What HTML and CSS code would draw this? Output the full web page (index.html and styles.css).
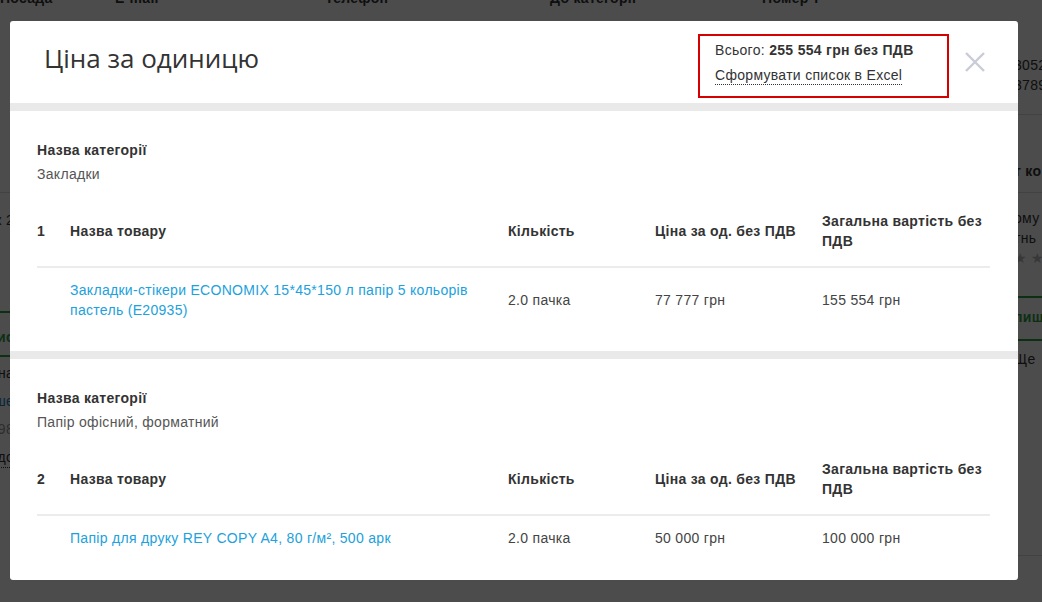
FILE: index.html
```html
<!DOCTYPE html>
<html lang="uk">
<head>
  <meta charset="UTF-8" />
  <meta name="viewport" content="width=device-width, initial-scale=1.0"/>
  <title>Ціна за одиницю</title>
  <link rel="stylesheet" href="styles.css">
</head>
<body>
  <!-- сторінка під модальним вікном -->
  <div class="page">
    <div class="page-head">
      <span>Посада</span>
      <span>E-mail</span>
      <span>Телефон</span>
      <span>До категорії</span>
      <span>Номер т</span>
    </div>
    <div class="page-body">
      <div class="side side-left">
        <div class="bg-row bg-r1"></div>
        <div class="bg-row bg-r2"><span>Блок 2</span></div>
        <div class="bg-row bg-green bg-r3"><b>Опис</b></div>
        <div class="bg-list">
          <p><span>Ціна</span></p>
          <p class="bg-link"><span>Детальніше</span></p>
          <p class="bg-muted"><span>098</span></p>
          <p><span class="bg-dotted">до</span></p>
        </div>
      </div>
      <div class="side side-right">
        <div class="bg-row bg-q1">30522<br>3789</div>
        <div class="bg-row bg-q2"><b>т ко</b></div>
        <div class="bg-row bg-green bg-q3">ому<br>тнь<br><span class="bg-stars">★ ★</span></div>
        <div class="bg-row bg-green bg-q4"><b class="bg-g">пиш</b></div>
        <div class="bg-row bg-q5">Ще</div>
      </div>
    </div>
  </div>

  <div class="overlay">
    <div class="modal">
      <div class="modal-head">
        <h1 class="modal-title">Ціна за одиницю</h1>
        <div class="total-box">
          <div>Всього: <b>255 554 грн без ПДВ</b></div>
          <a class="excel-link" href="#">Сформувати список в Excel</a>
        </div>
        <button class="close-btn" aria-label="Закрити">
          <svg width="20" height="20" viewBox="0 0 20 20">
            <path d="M1 1 L19 19 M19 1 L1 19" stroke="#c9ccd7" stroke-width="2.4" fill="none"/>
          </svg>
        </button>
      </div>

      <div class="cat">
        <div class="cat-label">Назва категорії</div>
        <div class="cat-name">Закладки</div>
        <div class="items">
          <div class="row row-head">
            <span>1</span>
            <span>Назва товару</span>
            <span>Кількість</span>
            <span>Ціна за од. без ПДВ</span>
            <span>Загальна вартість без ПДВ</span>
          </div>
          <div class="row">
            <span></span>
            <a class="item-link" href="#">Закладки-стікери ECONOMIX 15*45*150 л папір 5 кольорів пастель (E20935)</a>
            <span>2.0 пачка</span>
            <span>77 777 грн</span>
            <span>155 554 грн</span>
          </div>
        </div>
      </div>

      <div class="cat">
        <div class="cat-label">Назва категорії</div>
        <div class="cat-name">Папір офісний, форматний</div>
        <div class="items">
          <div class="row row-head">
            <span>2</span>
            <span>Назва товару</span>
            <span>Кількість</span>
            <span>Ціна за од. без ПДВ</span>
            <span>Загальна вартість без ПДВ</span>
          </div>
          <div class="row">
            <span></span>
            <a class="item-link" href="#">Папір для друку REY COPY A4, 80 г/м², 500 арк</a>
            <span>2.0 пачка</span>
            <span>50 000 грн</span>
            <span>100 000 грн</span>
          </div>
        </div>
      </div>
    </div>
  </div>
</body>
</html>
```

FILE: styles.css
```css
* {
  box-sizing: border-box;
}

body {
  margin: 0;
  font-family: "Liberation Sans", Arial, sans-serif;
  font-size: 14px;
  line-height: 20px;
  letter-spacing: 0.3px;
  color: #333;
  background: #fff;
  overflow: hidden;
  height: 100vh;
}

/* фон сторінки */
.page-head {
  display: grid;
  grid-template-columns: 115px 210px 225px 212px 1fr;
  height: 34px;
  margin-top: -12px;
  font-weight: bold;
  white-space: nowrap;
}

.page-body {
  display: flex;
  justify-content: space-between;
}

.side {
  width: 30px;
  overflow: hidden;
  white-space: nowrap;
}

.side-left {
  width: 14px;
}

.side-left .bg-row,
.side-left .bg-list p {
  display: flex;
  justify-content: flex-end;
  align-items: flex-start;
}

.side-right {
  padding-left: 2px;
}

.bg-row {
  border-bottom: 1px solid #ddd;
}

.bg-green {
  border-bottom: 2px solid #2e9e44;
}

.bg-r1 { height: 171px; }
.bg-r2 { height: 120px; padding-top: 17px; border-bottom: 2px solid #2e9e44; }
.bg-r3 { height: 44px; padding-top: 14px; color: #2e9e44; }

.bg-list p {
  margin: 6px 0 8px;
}

.bg-link { color: #1e7fc0; }
.bg-muted { color: #999; }
.bg-dotted { border-bottom: 1px dotted #333; }

.bg-q1 { height: 93px; padding-top: 33px; }
.bg-q2 { height: 78px; padding-top: 46px; }
.bg-q3 { height: 105px; padding-top: 15px; }
.bg-q4 { height: 43px; padding-top: 9px; }
.bg-q5 { height: 215px; padding-top: 8px; }
.bg-stars { color: #bbb; }
.bg-g { color: #2e9e44; }

/* модальне вікно */
.overlay {
  position: fixed;
  top: 0;
  left: 0;
  right: 0;
  bottom: 0;
  background: rgba(0, 0, 0, 0.7);
  padding: 21px 0 0 10px;
}

.modal {
  width: 1008px;
  background: #fff;
  border-radius: 3px;
}

.modal-head {
  display: flex;
  align-items: center;
  height: 90px;
  padding: 0 33px 0 34px;
  border-bottom: 8px solid #e9e9e9;
}

.modal-title {
  flex: 1;
  margin: 0 0 8px;
  font-family: "Open Sans", "Noto Sans", sans-serif;
  font-size: 26px;
  font-weight: 400;
  line-height: 30px;
  letter-spacing: 0;
  color: #333;
}

.total-box {
  width: 251px;
  height: 64px;
  margin-top: 8px;
  padding: 4px 15px 0;
  border: 2px solid #d50000;
}

.excel-link {
  display: inline-block;
  margin-top: 6px;
  color: #333;
  text-decoration: none;
  line-height: 18px;
  border-bottom: 1px dotted #333;
}

.close-btn {
  margin-left: 16px;
  padding: 0;
  border: none;
  background: none;
  cursor: pointer;
  width: 20px;
  height: 20px;
}

.close-btn svg {
  display: block;
}

.cat {
  padding: 29px 28px 19px 27px;
}

.cat + .cat {
  border-top: 8px solid #e9e9e9;
  padding-bottom: 20px;
}

.cat-label {
  font-weight: bold;
}

.cat-name {
  margin-top: 4px;
  color: #555;
}

.items {
  margin-top: 12px;
}

.row {
  display: grid;
  grid-template-columns: 33px 438px 147px 167px 1fr;
  align-items: center;
  padding: 12px 0;
  color: #444;
}

.row-head {
  padding: 15px 0;
  font-weight: bold;
  color: #333;
  border-bottom: 2px solid #ececec;
}

.row > :nth-child(2) {
  padding-right: 30px;
}

.item-link {
  color: #21a1dc;
  text-decoration: none;
}
```
